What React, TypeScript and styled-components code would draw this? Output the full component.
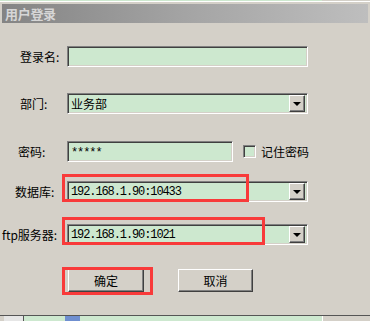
import React from "react";
import styled, { createGlobalStyle } from "styled-components";

const GlobalStyle = createGlobalStyle`
  html, body {
    margin: 0;
    padding: 0;
    background: #d4d0c8;
  }
  body {
    font-family: "Noto Sans CJK SC", "Noto Sans", sans-serif;
    font-size: 12px;
    color: #000;
  }
`;

const App = () => {
  return (
    <Window>
      <GlobalStyle />
      <TopStrip />
      <TitleBar>用户登录</TitleBar>

      <Form>
        <Row $top={23}>
          <Label $indent={20}>登录名:</Label>
          <TextBox $width={241} />
        </Row>

        <Row $top={26}>
          <Label $indent={20}>部门:</Label>
          <Combo $width={241}>
            <ComboText $cjk>业务部</ComboText>
            <DropButton>
              <Arrow />
            </DropButton>
          </Combo>
        </Row>

        <Row $top={27}>
          <Label $indent={18}>密码:</Label>
          <TextBox $width={166}>
            <Mono>*****</Mono>
          </TextBox>
          <CheckLabel>
            <CheckBox />
            记住密码
          </CheckLabel>
        </Row>

        <Row $top={19}>
          <Label $indent={15}>数据库:</Label>
          <Combo $width={241}>
            <ComboText>192.168.1.90:10433</ComboText>
            <DropButton>
              <Arrow />
            </DropButton>
          </Combo>
        </Row>

        <Row $top={22}>
          <Label $indent={2}>ftp服务器:</Label>
          <Combo $width={241}>
            <ComboText>192.168.1.90:1021</ComboText>
            <DropButton>
              <Arrow />
            </DropButton>
          </Combo>
        </Row>

        <ButtonRow>
          <Button $width={76}>确定</Button>
          <Button $width={75}>取消</Button>
        </ButtonRow>

        <Highlight $left={62} $top={151} $width={187} $height={28} />
        <Highlight $left={62} $top={194} $width={203} $height={28} />
        <Highlight $left={62} $top={244} $width={91} $height={28} />
      </Form>

      <BottomStrip />
    </Window>
  );
};

export default App;

const Window = styled.div`
  width: 370px;
  height: 321px;
  display: flex;
  flex-direction: column;
  background: #d4d0c8;
  overflow: hidden;
`;

const TopStrip = styled.div`
  height: 4px;
  flex-shrink: 0;
  background:
    linear-gradient(#cde8cf, #cde8cf) 0 0 / 322px 1px no-repeat,
    linear-gradient(#ffffff, #ffffff) 0 1px / 100% 1px no-repeat,
    #d4d0c8;
`;

const TitleBar = styled.div`
  height: 19px;
  margin: 0 2px;
  flex-shrink: 0;
  display: flex;
  align-items: center;
  padding-left: 3px;
  background: linear-gradient(to right, #848484, #a4a4a4 50%, #bebebe);
  color: #d6d6d6;
  font-weight: bold;
  font-size: 13px;
  letter-spacing: -0.3px;
`;

const Form = styled.div`
  position: relative;
  flex: 1;
  display: flex;
  flex-direction: column;
`;

const Row = styled.div<{ $top: number }>`
  display: flex;
  align-items: center;
  height: 21px;
  margin-top: ${(p) => p.$top}px;
`;

const Label = styled.div<{ $indent: number }>`
  box-sizing: border-box;
  width: 67px;
  padding-left: ${(p) => p.$indent}px;
  white-space: nowrap;
  font-size: 12px;
`;

const sunken = `
  box-sizing: border-box;
  background: #cde8cf;
  border-top: 1px solid #808080;
  border-left: 1px solid #808080;
  border-bottom: 1px solid #ffffff;
  border-right: 1px solid #ffffff;
  box-shadow: inset 1px 1px 0 #404040, inset -1px -1px 0 #d4d0c8;
`;

const TextBox = styled.div<{ $width: number }>`
  ${sunken}
  width: ${(p) => p.$width}px;
  height: 21px;
  display: flex;
  align-items: center;
  padding-left: 3px;
`;

const Mono = styled.span`
  font-family: "Liberation Mono", "DejaVu Sans Mono", monospace;
  font-size: 12px;
  letter-spacing: -1.1px;
  padding-top: 3px;
`;

const Combo = styled.div<{ $width: number }>`
  ${sunken}
  width: ${(p) => p.$width}px;
  height: 21px;
  display: flex;
  align-items: center;
  padding: 2px;
`;

const ComboText = styled.span<{ $cjk?: boolean }>`
  flex: 1;
  padding-left: 1px;
  font-family: ${(p) =>
    p.$cjk
      ? `"Noto Sans CJK SC", sans-serif`
      : `"Liberation Mono", "DejaVu Sans Mono", monospace`};
  font-size: 12px;
  letter-spacing: ${(p) => (p.$cjk ? 0 : -1.1)}px;
  white-space: nowrap;
`;

const DropButton = styled.div`
  box-sizing: border-box;
  width: 16px;
  height: 17px;
  display: flex;
  align-items: center;
  justify-content: center;
  background: #d4d0c8;
  border-top: 1px solid #ffffff;
  border-left: 1px solid #ffffff;
  border-bottom: 1px solid #404040;
  border-right: 1px solid #404040;
  box-shadow: inset -1px -1px 0 #808080;
`;

const Arrow = styled.div`
  width: 0;
  height: 0;
  border-left: 4px solid transparent;
  border-right: 4px solid transparent;
  border-top: 4px solid #000;
  margin-top: 1px;
`;

const CheckLabel = styled.label`
  display: flex;
  align-items: center;
  gap: 5px;
  margin-left: 10px;
  font-size: 12px;
  white-space: nowrap;
`;

const CheckBox = styled.span`
  ${sunken}
  display: inline-block;
  width: 13px;
  height: 13px;
`;

const ButtonRow = styled.div`
  display: flex;
  gap: 34px;
  padding-left: 68px;
  margin-top: 24px;
`;

const Button = styled.div<{ $width: number }>`
  box-sizing: border-box;
  width: ${(p) => p.$width}px;
  height: 23px;
  display: flex;
  align-items: center;
  justify-content: center;
  background: #d4d0c8;
  border-top: 1px solid #ffffff;
  border-left: 1px solid #ffffff;
  border-bottom: 1px solid #404040;
  border-right: 1px solid #404040;
  box-shadow: inset -1px -1px 0 #808080;
  font-size: 12px;
`;

const Highlight = styled.div<{
  $left: number;
  $top: number;
  $width: number;
  $height: number;
}>`
  position: absolute;
  box-sizing: border-box;
  left: ${(p) => p.$left}px;
  top: ${(p) => p.$top}px;
  width: ${(p) => p.$width}px;
  height: ${(p) => p.$height}px;
  border: 3px solid #f83a3a;
  pointer-events: none;
`;

const BottomStrip = styled.div`
  height: 5px;
  flex-shrink: 0;
  border-top: 1px solid #555555;
  background:
    linear-gradient(#555555, #555555) 23px 0 / 1px 100% no-repeat,
    linear-gradient(#e6e6e6, #e6e6e6) 4px 0 / 19px 100% no-repeat,
    linear-gradient(#6f8fd0, #6f8fd0) 65px 0 / 15px 100% no-repeat,
    linear-gradient(#cde8cf, #cde8cf) 24px 0 / 298px 100% no-repeat,
    linear-gradient(#ffffff, #ffffff) 322px 0 / 1px 100% no-repeat,
    #d4d0c8;
`;
